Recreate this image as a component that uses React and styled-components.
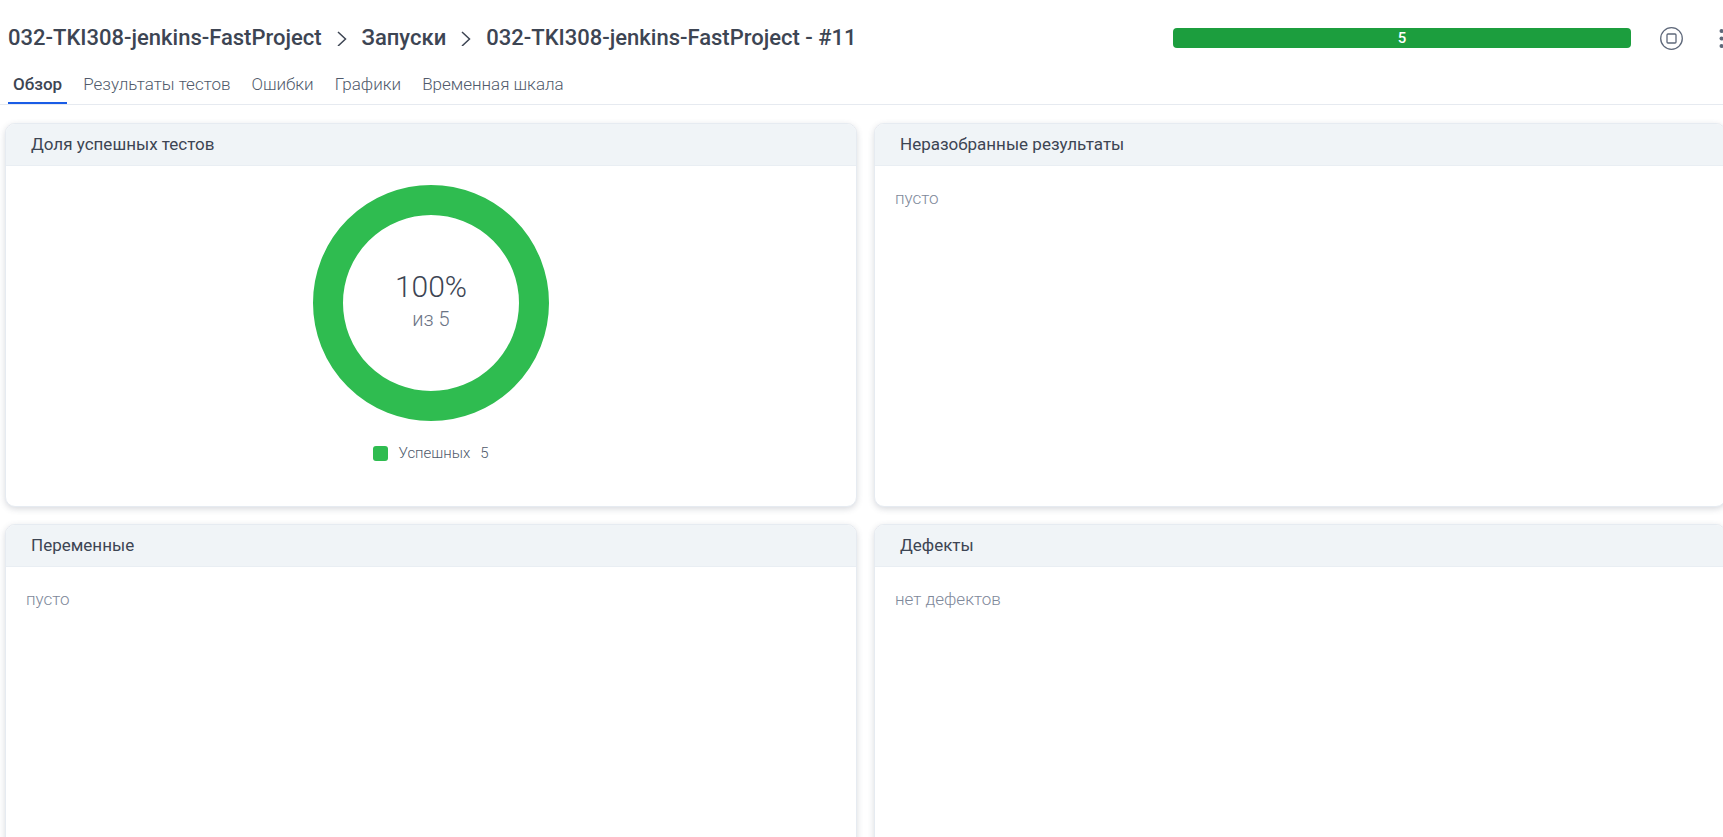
import React from 'react';
import styled, { createGlobalStyle } from 'styled-components';

const GlobalStyle = createGlobalStyle`
  *, *::before, *::after { box-sizing: border-box; }
  body {
    margin: 0;
    background: #fff;
    color: #3d4553;
    font-family: Roboto, "Liberation Sans", sans-serif;
    font-size: 17px;
  }
`;

const Page = styled.div`
  min-height: 100vh;
  overflow: hidden;
`;

const Header = styled.header`
  display: flex;
  align-items: center;
  height: 60px;
  padding: 16px 0 0 8px;
  margin-right: -10px;
`;

const Breadcrumbs = styled.nav`
  display: flex;
  align-items: center;
  gap: 15px;
  flex: 1;
  white-space: nowrap;
`;

const Crumb = styled.a`
  color: #3d4553;
  font-size: 22px;
  font-weight: 500;
  line-height: 28px;
  text-decoration: none;
`;

const Chevron = styled.svg`
  width: 10px;
  height: 16px;
  flex: none;
  fill: none;
  stroke: #3d4553;
`;

const StatusBar = styled.div`
  width: 458px;
  height: 20px;
  border-radius: 4px;
  background: #1c9e3e;
  color: #fff;
  font-size: 15px;
  font-weight: 500;
  line-height: 20px;
  text-align: center;
`;

const Actions = styled.div`
  display: flex;
  gap: 26px;
  margin-left: 28px;
`;

const IconButton = styled.button`
  display: flex;
  align-items: center;
  justify-content: center;
  width: 24px;
  height: 24px;
  padding: 0;
  border: 0;
  background: none;
  color: #5e687a;
`;

const Tabs = styled.nav`
  display: flex;
  gap: 11px;
  height: 45px;
  padding: 8px 8px 0;
  border-bottom: 1px solid #e6eaf0;
`;

const Tab = styled.a`
  padding: 4px 5px 0;
  border-bottom: 2px solid ${({ $active }) => ($active ? '#1a5ce6' : 'transparent')};
  color: ${({ $active }) => ($active ? '#3d4553' : '#505a6b')};
  font-weight: ${({ $active }) => ($active ? 500 : 300)};
  line-height: 24px;
  text-decoration: none;
  white-space: nowrap;
`;

const Grid = styled.main`
  display: grid;
  grid-template-columns: 1fr 1fr;
  grid-auto-rows: 384px;
  gap: 17px;
  height: calc(100vh - 105px);
  min-height: 420px;
  padding: 18px 0 0 5px;
  margin-right: -3px;
`;

const Card = styled.section`
  display: flex;
  flex-direction: column;
  overflow: hidden;
  border: 1px solid #e6ebf1;
  border-radius: 10px;
  background: #fff;
  box-shadow: 0 2px 6px rgba(60, 70, 90, 0.2);
`;

const CardTitle = styled.h2`
  margin: 0;
  padding: 0 25px;
  border-bottom: 1px solid #e9eef3;
  background: #f0f4f7;
  font-size: 17px;
  font-weight: 400;
  line-height: 41px;
`;

const Empty = styled.p`
  margin: 0;
  padding: 20px;
  color: #7e889a;
  font-weight: 300;
  line-height: 24px;
`;

const ChartBody = styled.div`
  display: flex;
  flex-direction: column;
  align-items: center;
  gap: 22px;
  padding-top: 19px;
`;

const Donut = styled.div`
  display: grid;
  place-items: center;
  width: 236px;
  height: 236px;

  > * { grid-area: 1 / 1; }
`;

const DonutLabel = styled.div`
  text-align: center;
  font-weight: 300;
`;

const Percent = styled.div`
  font-size: 30px;
  line-height: 32px;
`;

const Total = styled.div`
  color: #6b7485;
  font-size: 20px;
  line-height: 32px;
`;

const Legend = styled.div`
  display: flex;
  align-items: center;
  gap: 10px;
  color: #505a6b;
  font-size: 15px;
  font-weight: 300;
  line-height: 20px;
`;

const Swatch = styled.span`
  width: 15px;
  height: 15px;
  border-radius: 3px;
  background: #2fbc50;
`;

const tabs = ['Обзор', 'Результаты тестов', 'Ошибки', 'Графики', 'Временная шкала'];
const crumbs = ['032-TKI308-jenkins-FastProject', 'Запуски', '032-TKI308-jenkins-FastProject - #11'];

function Panel({ title, empty, children }) {
  return (
    <Card>
      <CardTitle>{title}</CardTitle>
      {empty ? <Empty>{empty}</Empty> : children}
    </Card>
  );
}

export default function App() {
  return (
    <Page>
      <GlobalStyle />
      <Header>
        <Breadcrumbs aria-label="Навигация">
          {crumbs.map((text, i) => (
            <React.Fragment key={text}>
              {i > 0 && (
                <Chevron viewBox="0 0 10 16" strokeWidth="1.5" aria-hidden="true">
                  <path d="M1 2l7.5 7L1 16" />
                </Chevron>
              )}
              <Crumb href="#">{text}</Crumb>
            </React.Fragment>
          ))}
        </Breadcrumbs>
        <StatusBar>5</StatusBar>
        <Actions>
          <IconButton aria-label="Остановить">
            <svg width="24" height="24" viewBox="0 0 24 24" fill="none" stroke="currentColor" strokeWidth="1.3">
              <circle cx="12.5" cy="12.5" r="10.8" />
              <rect x="8" y="8" width="9" height="9" rx="1" />
            </svg>
          </IconButton>
          <IconButton aria-label="Меню">
            <svg width="24" height="24" viewBox="0 0 24 24" fill="currentColor">
              <circle cx="12.5" cy="5" r="2" />
              <circle cx="12.5" cy="12.5" r="2" />
              <circle cx="12.5" cy="20" r="2" />
            </svg>
          </IconButton>
        </Actions>
      </Header>
      <Tabs aria-label="Разделы">
        {tabs.map((text, i) => (
          <Tab key={text} href="#" $active={i === 0}>{text}</Tab>
        ))}
      </Tabs>
      <Grid>
        <Panel title="Доля успешных тестов">
          <ChartBody>
            <Donut>
              <svg width="236" height="236" viewBox="0 0 236 236" aria-hidden="true">
                <circle cx="118" cy="118" r="103" fill="none" stroke="#2fbc50" strokeWidth="30" />
              </svg>
              <DonutLabel>
                <Percent>100%</Percent>
                <Total>из 5</Total>
              </DonutLabel>
            </Donut>
            <Legend>
              <Swatch />
              <span>Успешных</span>
              <span>5</span>
            </Legend>
          </ChartBody>
        </Panel>
        <Panel title="Неразобранные результаты" empty="пусто" />
        <Panel title="Переменные" empty="пусто" />
        <Panel title="Дефекты" empty="нет дефектов" />
      </Grid>
    </Page>
  );
}
